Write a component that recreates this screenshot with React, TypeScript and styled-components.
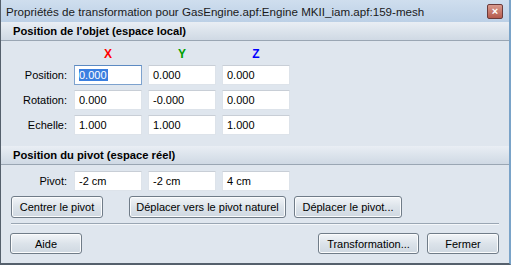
import * as React from 'react';
import styled, { createGlobalStyle } from 'styled-components';

const Global = createGlobalStyle`
    html, body { margin: 0; padding: 0; background: #dfe6ee; }
    body { font-family: Tahoma, "Liberation Sans", Arial, sans-serif; font-size: 11px; color: #000; }
`;

const Window = styled.div`
    width: 511px;
    height: 265px;
    box-sizing: border-box;
    display: flex;
    flex-direction: column;
    background: #dfe6ee;
    border-left: 1px solid #55606c;
    border-right: 2px solid #7aa3c8;
    border-bottom: 2px solid #55606c;
    overflow: hidden;
    white-space: nowrap;
`;

const TitleBar = styled.div`
    height: 22px;
    flex: none;
    display: flex;
    align-items: center;
    justify-content: space-between;
    padding: 0 6px 0 5px;
    background: linear-gradient(#cfdeee, #bcd0e6);
    font-size: 11.6px;
    color: #1a1a1a;
`;

const CloseBox = styled.div`
    width: 14px;
    height: 13px;
    border: 1px solid #6a3a3a;
    border-radius: 2px;
    background: linear-gradient(#d99a8e, #b55a4c);
    display: flex;
    align-items: center;
    justify-content: center;
    color: #fff;
    font-size: 11px;
    font-weight: bold;
    line-height: 1;
`;

const SectionHeader = styled.div`
    height: 18px;
    flex: none;
    display: flex;
    align-items: center;
    padding-left: 12px;
    font-weight: bold;
    font-size: 11.2px;
    background: linear-gradient(#e9eef4, #cfd9e4);
    border-bottom: 1px solid #9aa6b3;
`;

const Section = styled.div<{ $pad: string }>`
    display: flex;
    flex-direction: column;
    gap: 5px;
    padding: ${p => p.$pad};
`;

const Row = styled.div`
    display: flex;
    align-items: center;
    gap: 6px;
`;

const Label = styled.div`
    width: 66px;
    text-align: right;
    padding-right: 1px;
`;

const AxisLabel = styled.div<{ $c: string }>`
    width: 68px;
    text-align: center;
    color: ${p => p.$c};
    font-weight: bold;
    font-size: 12px;
    height: 12px;
    line-height: 12px;
`;

const Field = styled.div<{ $focus?: boolean }>`
    width: 68px;
    height: 20px;
    box-sizing: border-box;
    background: #fff;
    border: 1px solid ${p => (p.$focus ? '#7da2ce' : '#dde3ea')};
    border-top-color: ${p => (p.$focus ? '#5c8ac2' : '#c8ced6')};
    display: flex;
    align-items: center;
    padding-left: 4px;
`;

const Sel = styled.span`
    background: #3a7fe0;
    color: #fff;
    padding: 0 1px 0 0;
`;

const Button = styled.div<{ $w: number; $h?: number }>`
    width: ${p => p.$w}px;
    height: ${p => p.$h ?? 22}px;
    box-sizing: border-box;
    border: 1px solid #707c88;
    border-radius: 3px;
    background: linear-gradient(#f2f5f8, #dce3ea 50%, #cfd8e1);
    box-shadow: inset 0 0 0 1px #fbfcfd;
    display: flex;
    align-items: center;
    justify-content: center;
`;

const ButtonRow = styled.div`
    display: flex;
    align-items: center;
`;

const Gap = styled.div<{ $w?: number; $h?: number }>`
    flex: none;
    width: ${p => p.$w ?? 0}px;
    height: ${p => p.$h ?? 0}px;
`;

const Sep = styled.div`
    height: 1px;
    margin: 5px 10px 0 10px;
    background: #9aa6b3;
    border-bottom: 1px solid #f4f7fa;
`;

const Footer = styled.div`
    display: flex;
    align-items: center;
    padding: 8px 10px 0 9px;
    gap: 8px;
`;

const Spacer = styled.div`
    flex: 1;
`;

const rows = [
    { label: 'Position:', v: ['0.000', '0.000', '0.000'] },
    { label: 'Rotation:', v: ['0.000', '-0.000', '0.000'] },
    { label: 'Echelle:', v: ['1.000', '1.000', '1.000'] },
];

export default function App() {
    return (
        <Window>
            <Global />
            <TitleBar>
                <span>Propriétés de transformation pour GasEngine.apf:Engine MKII_iam.apf:159-mesh</span>
                <CloseBox>×</CloseBox>
            </TitleBar>
            <SectionHeader>Position de l'objet (espace local)</SectionHeader>
            <Section $pad="7px 0 0 0">
                <Row>
                    <Label />
                    <AxisLabel $c="#ff0000">X</AxisLabel>
                    <AxisLabel $c="#00a000">Y</AxisLabel>
                    <AxisLabel $c="#0000ff">Z</AxisLabel>
                </Row>
                {rows.map((r, i) => (
                    <Row key={r.label}>
                        <Label>{r.label}</Label>
                        {r.v.map((v, j) => (
                            <Field key={j} $focus={i === 0 && j === 0}>
                                {i === 0 && j === 0 ? <Sel>{v}</Sel> : v}
                            </Field>
                        ))}
                    </Row>
                ))}
            </Section>
            <Gap $h={11} />
            <SectionHeader>Position du pivot (espace réel)</SectionHeader>
            <Section $pad="6px 0 0 0">
                <Row>
                    <Label>Pivot:</Label>
                    <Field>-2 cm</Field>
                    <Field>-2 cm</Field>
                    <Field>4 cm</Field>
                </Row>
                <ButtonRow>
                    <Gap $w={10} />
                    <Button $w={92}>Centrer le pivot</Button>
                    <Gap $w={26} />
                    <Button $w={157}>Déplacer vers le pivot naturel</Button>
                    <Gap $w={8} />
                    <Button $w={108}>Déplacer le pivot...</Button>
                </ButtonRow>
            </Section>
            <Sep />
            <Footer>
                <Button $w={72} $h={21}>Aide</Button>
                <Spacer />
                <Button $w={101} $h={21}>Transformation...</Button>
                <Button $w={72} $h={21}>Fermer</Button>
            </Footer>
        </Window>
    );
}
